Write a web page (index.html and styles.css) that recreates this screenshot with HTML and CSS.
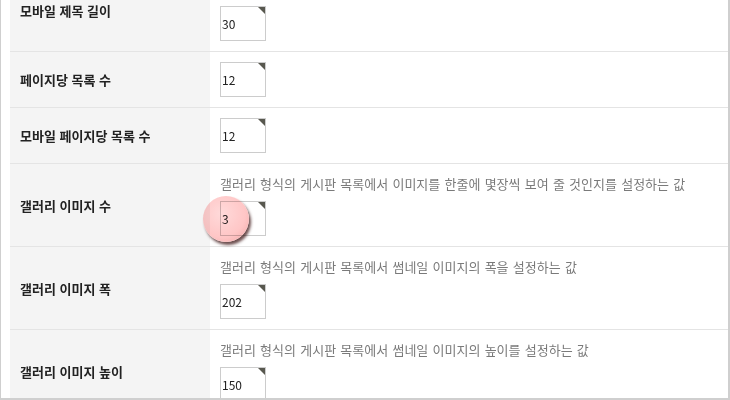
FILE: index.html
```html
<!DOCTYPE html>
<html lang="ko">
<head>
    <meta charset="UTF-8">
    <meta name="viewport" content="width=device-width, initial-scale=1.0">
    <title>게시판 설정</title>
    <link rel="stylesheet" href="styles.css">
</head>
<body>
    <div class="frame">
        <table class="config">
            <tbody>
                <tr class="first">
                    <th>모바일 제목 길이</th>
                    <td>
                        <div class="desc-space"></div>
                        <span class="field"><input type="text" value="30"></span>
                    </td>
                </tr>
                <tr>
                    <th>페이지당 목록 수</th>
                    <td><span class="field"><input type="text" value="12"></span></td>
                </tr>
                <tr>
                    <th>모바일 페이지당 목록 수</th>
                    <td><span class="field"><input type="text" value="12"></span></td>
                </tr>
                <tr>
                    <th>갤러리 이미지 수</th>
                    <td>
                        <p class="desc">갤러리 형식의 게시판 목록에서 이미지를 한줄에 몇장씩 보여 줄 것인지를 설정하는 값</p>
                        <span class="field"><input type="text" value="3"></span>
                    </td>
                </tr>
                <tr>
                    <th>갤러리 이미지 폭</th>
                    <td>
                        <p class="desc">갤러리 형식의 게시판 목록에서 썸네일 이미지의 폭을 설정하는 값</p>
                        <span class="field"><input type="text" value="202"></span>
                    </td>
                </tr>
                <tr>
                    <th>갤러리 이미지 높이</th>
                    <td>
                        <p class="desc">갤러리 형식의 게시판 목록에서 썸네일 이미지의 높이를 설정하는 값</p>
                        <span class="field"><input type="text" value="150"></span>
                    </td>
                </tr>
            </tbody>
        </table>
    </div>
    <!-- 클릭 위치 표시 -->
    <div class="click-mark"></div>
</body>
</html>
```

FILE: styles.css
```css
body {
    margin: 0;
    background: #fff;
    font-family: "Noto Sans CJK KR", "Noto Sans", sans-serif;
}
.frame {
    box-sizing: border-box;
    width: 730px;
    height: 400px;
    overflow: hidden;
    border-left: 1px solid #cfcfcf;
    border-right: 2px solid #cfcfcf;
    border-bottom: 2px solid #cfcfcf;
    padding-left: 9px;
}
.config {
    width: 100%;
    border-collapse: collapse;
    margin-top: -31px;
}
.config tr {
    border-top: 1px solid #e4e4e4;
}
.config tr.first {
    border-top: none;
}
.config th {
    width: 190px;
    background: #f4f4f4;
    padding: 0 0 0 10px;
    text-align: left;
    font-size: 13px;
    font-weight: bold;
    color: #222;
    vertical-align: middle;
}
.config td {
    padding: 10px;
    vertical-align: top;
}
.desc {
    margin: 0 0 8px;
    font-size: 13px;
    line-height: 19px;
    word-spacing: 0.6px;
    color: #7a7a7a;
}
.desc-space {
    height: 27px;
}
.field {
    position: relative;
    display: block;
    width: 46px;
    height: 35px;
}
.field input {
    box-sizing: border-box;
    width: 46px;
    height: 35px;
    margin: 0;
    padding: 0 1px;
    border: 1px solid #cccccc;
    font-family: "Noto Sans CJK KR", "Noto Sans", sans-serif;
    font-size: 12px;
    color: #222;
    background: #fff;
    outline: none;
}
.field::after {
    content: "";
    position: absolute;
    top: 1px;
    right: 1px;
    border-style: solid;
    border-width: 0 7px 7px 0;
    border-color: transparent #58584f transparent transparent;
}
.click-mark {
    position: absolute;
    left: 203px;
    top: 196px;
    width: 46px;
    height: 46px;
    border-radius: 50%;
    background: radial-gradient(circle at 40% 38%, #ffdada 0%, #ffc6c6 60%, #eea4a4 100%);
    box-shadow: 2px 3px 3px rgba(60, 20, 20, 0.75);
    mix-blend-mode: multiply;
}
```
